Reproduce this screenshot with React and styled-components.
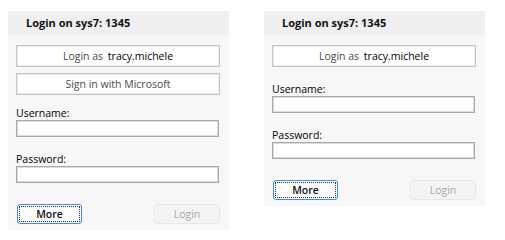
import React from 'react'
import styled, { createGlobalStyle } from 'styled-components'

const GlobalStyle = createGlobalStyle`
    body {
        margin: 0;
        background: #ffffff;
        font-family: "Open Sans", "Noto Sans", sans-serif;
    }
`

const Page = styled.div`
    display: flex;
    align-items: flex-start;
    gap: 35px;
    padding: 11px 0 0 8px;
`

const Panel = styled.div`
    width: 221px;
    background-color: #f7f7f7;
    display: flex;
    flex-direction: column;
`

const Header = styled.div`
    height: 24px;
    line-height: 24px;
    padding-left: 18px;
    background-color: #efefef;
    font-size: 11px;
    font-weight: 700;
    color: #111;
`

const Body = styled.div`
    padding: 10px 9px 6px 8px;
    display: flex;
    flex-direction: column;
`

const WideButton = styled.button`
    height: 22px;
    margin: 0 0 6px 0;
    padding: 0;
    background: #ffffff;
    border: 1px solid #c4c4c4;
    box-shadow: inset 0 0 0 1px #ececec;
    font-family: inherit;
    font-size: 10.5px;
    color: #4a4a4a;
    cursor: pointer;

    b {
        font-weight: 400;
        margin-left: 2px;
        color: #000;
    }
`

const Fields = styled.div`
    margin-top: ${props => props.offset}px;
    display: flex;
    flex-direction: column;
`

const Label = styled.label`
    height: 14px;
    line-height: 14px;
    font-size: 10.5px;
    color: #000;
`

const Input = styled.input`
    box-sizing: border-box;
    width: 203px;
    height: 17px;
    margin: 0 0 15px 0;
    border: 1px solid #a9a9a9;
    box-shadow: inset 0 0 0 1px #dcdcdc;
    background: #fff;
    outline: none;
`

const Actions = styled.div`
    margin-top: 6px;
    display: flex;
    justify-content: space-between;
    padding-left: 1px;
`

const SmallButton = styled.button`
    box-sizing: border-box;
    width: ${props => props.width}px;
    height: 20px;
    padding: 0;
    border-radius: 3px;
    font-family: inherit;
    font-size: 10.5px;
    font-weight: ${props => props.primary ? 600 : 400};
    background: ${props => props.primary ? '#fdfdfd' : '#f4f4f4'};
    border: 1px solid ${props => props.primary ? '#3c8fe0' : '#e8e8e8'};
    color: ${props => props.primary ? '#111' : '#a8a8a8'};
    outline: ${props => props.primary ? '1px dotted #333' : 'none'};
    outline-offset: -3px;
`

const LoginPanel = ({ withMicrosoft }) => {
    return (
        <Panel>
            <Header>Login on sys7: 1345</Header>
            <Body>
                <WideButton>Login as <b>tracy.michele</b></WideButton>
                {withMicrosoft && <WideButton>Sign in with Microsoft</WideButton>}
                <Fields offset={withMicrosoft ? 5 : 9}>
                    <Label>Username:</Label>
                    <Input type="text" />
                    <Label>Password:</Label>
                    <Input type="password" />
                </Fields>
                <Actions>
                    <SmallButton primary width={65}>More</SmallButton>
                    <SmallButton width={66} disabled>Login</SmallButton>
                </Actions>
            </Body>
        </Panel>
    )
}

const App = () => {
    return (
        <>
            <GlobalStyle />
            <Page>
                <LoginPanel withMicrosoft />
                <LoginPanel />
            </Page>
        </>
    )
}

export default App
